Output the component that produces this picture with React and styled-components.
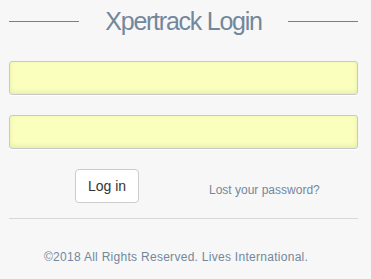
import styled, { createGlobalStyle } from "styled-components";

const GlobalStyle = createGlobalStyle`
  html, body {
    margin: 0;
    background: #f7f7f7;
    font-family: "Liberation Sans", Arial, sans-serif;
  }
`;

function App() {
  return (
    <>
      <GlobalStyle />
      <Wrapper>
        <Title>
          <span>Xpertrack Login</span>
        </Title>

        <Form onSubmit={(e) => e.preventDefault()}>
          <Field type="text" aria-label="Username" />
          <Field type="password" aria-label="Password" />

          <Actions>
            <LoginButton type="submit">Log in</LoginButton>
            <ResetLink href="#">Lost your password?</ResetLink>
          </Actions>
        </Form>

        <Separator />

        <Footer>©2018 All Rights Reserved. Lives International.</Footer>
      </Wrapper>
    </>
  );
}

const Wrapper = styled.div`
  padding: 7px 13px 0 9px;
`;

/* Heading with rules either side */

const Title = styled.h1`
  margin: 0;
  height: 28px;
  display: flex;
  justify-content: space-between;
  font-size: 25px;
  font-weight: 400;
  line-height: 28px;
  letter-spacing: -0.05em;
  color: #73879c;

  &::before,
  &::after {
    content: "";
    width: 20%;
    height: 1px;
    margin-top: 14px;
    background: #7e7e7e;
  }
`;

/* Form */

const Form = styled.form`
  margin-top: 26px;
`;

const Field = styled.input`
  display: block;
  box-sizing: border-box;
  width: 100%;
  height: 34px;
  margin: 0 0 20px;
  padding: 0 10px;
  border: 1px solid #c8c8c8;
  border-radius: 3px;
  background: #faffbd;
  box-shadow:
    0 1px 0 #fff,
    inset 0 -2px 5px rgba(0, 0, 0, 0.08);
  outline: none;
`;

const Actions = styled.div`
  display: flex;
  align-items: flex-start;
  padding-left: 66px;
`;

const LoginButton = styled.button`
  box-sizing: border-box;
  width: 64px;
  height: 34px;
  padding: 0;
  border: 1px solid #ccc;
  border-radius: 4px;
  background: #fff;
  color: #333;
  font-family: inherit;
  font-size: 14px;
  line-height: 20px;
  white-space: nowrap;
  cursor: pointer;
`;

const ResetLink = styled.a`
  margin: 13px 0 0 70px;
  font-size: 12px;
  line-height: 17px;
  color: #73879c;
  text-decoration: none;
`;

const Separator = styled.div`
  margin-top: 15px;
  border-top: 1px solid #d8d8d8;
`;

const Footer = styled.p`
  margin: 30px 0 0;
  padding-left: 35px;
  font-size: 12px;
  line-height: 17px;
  letter-spacing: 0.28px;
  color: #73879c;
`;

export default App;
